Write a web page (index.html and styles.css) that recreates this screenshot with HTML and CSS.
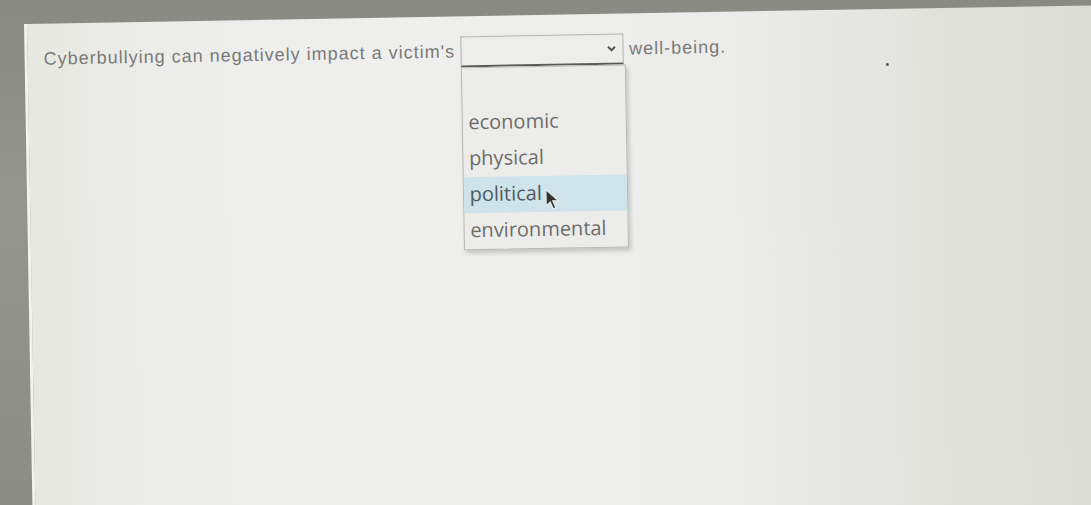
FILE: index.html
```html
<!DOCTYPE html>
<html lang="en">
<head>
  <meta charset="UTF-8" />
  <meta name="viewport" content="width=device-width, initial-scale=1.0"/>
  <title>Question</title>
  <link rel="stylesheet" href="styles.css">
</head>
<body>

  <!-- Monitor screen -->
  <div class="screen">
    <div class="question">
      <span class="prompt">Cyberbullying can negatively impact a victim's</span>
      <div class="dropdown">
        <div class="select-box">
          <svg class="chevron" width="10" height="8" viewBox="0 0 10 8">
            <path d="M1.5 2 L5 5.5 L8.5 2" fill="none" stroke="#555" stroke-width="2"/>
          </svg>
        </div>
        <ul class="options">
          <li class="option blank">&nbsp;</li>
          <li class="option">economic</li>
          <li class="option">physical</li>
          <li class="option active">political
            <svg class="pointer" width="14" height="22" viewBox="0 0 14 22">
              <path d="M1 1 L1 17 L5 13 L8 20 L10.5 19 L7.5 12 L13 12 Z" fill="#333" stroke="#eee" stroke-width="1"/>
            </svg>
          </li>
          <li class="option">environmental</li>
        </ul>
      </div>
      <span class="prompt">well-being.</span>
    </div>
    <div class="speck"></div>
  </div>

</body>
</html>
```

FILE: styles.css
```css
* {
  margin: 0;
  padding: 0;
  box-sizing: border-box;
}

html, body {
  height: 100%;
  overflow: hidden;
}

body {
  background: linear-gradient(180deg, #8a8a84 0%, #95958f 40%, #8d8d88 100%);
  font-family: 'Liberation Sans', Arial, sans-serif;
  padding: 24px 0 0 24px;
}

.screen {
  position: relative;
  width: 1072px;
  height: 500px;
  background: linear-gradient(90deg, #e8e8e2 0%, #ececea 12%, #efefee 35%, #ececeb 65%, #e2e2dd 85%, #dcdcd6 100%);
  border-left: 3px solid #f3f3ee;
  transform: rotate(-1deg);
  transform-origin: top left;
}

.question {
  display: flex;
  align-items: center;
  padding: 20px 0 0 16px;
}

.prompt {
  font-size: 18px;
  color: #7a7a78;
  letter-spacing: 1px;
}

.dropdown {
  position: relative;
  width: 163px;
  margin: 0 6px 0 5px;
}

.select-box {
  height: 31px;
  background: #ededeb;
  border: 1px solid #b4b4b0;
  border-bottom: 2px solid #5b5b58;
  display: flex;
  align-items: center;
  justify-content: flex-end;
  padding-right: 6px;
}

/* Open list hangs below the field, over the page */
.options {
  position: absolute;
  top: 31px;
  left: 0;
  width: 165px;
  list-style: none;
  background: #ececea;
  border: 1px solid #b8b8b4;
  box-shadow: 2px 3px 4px rgba(0, 0, 0, 0.18);
  z-index: 5;
  font-family: 'Open Sans', sans-serif;
}

.option {
  position: relative;
  height: 36px;
  line-height: 33px;
  padding-left: 6px;
  font-size: 20px;
  color: #6d6d6b;
}

.option.blank {
  height: 37px;
}

.option.active {
  background: #cfe3ea;
  color: #4f5a60;
}

.pointer {
  position: absolute;
  left: 81px;
  top: 13px;
}

.speck {
  position: absolute;
  left: 858px;
  top: 54px;
  width: 3px;
  height: 3px;
  border-radius: 50%;
  background: #555;
}
```
